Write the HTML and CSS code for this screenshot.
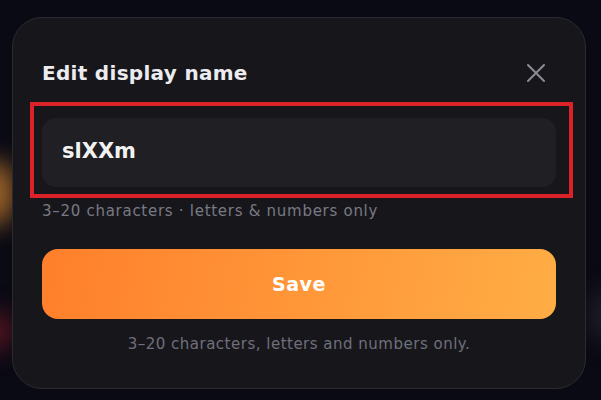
FILE: index.html
```html
<!DOCTYPE html>
<html lang="en">
<head>
    <meta charset="UTF-8">
    <meta name="viewport" content="width=device-width, initial-scale=1.0">
    <title>Edit display name</title>
    <link rel="stylesheet" href="styles.css">
</head>
<body>
    <div class="glow glow-orange"></div>
    <div class="glow glow-red"></div>
    <div class="glow glow-grey"></div>

    <div class="modal">
        <div class="modal-head">
            <h2>Edit display name</h2>
            <button class="close" aria-label="Close">
                <svg width="20" height="20" viewBox="0 0 20 20">
                    <path d="M2 2 L18 18 M18 2 L2 18" stroke="#8b8b96" stroke-width="2" stroke-linecap="round"/>
                </svg>
            </button>
        </div>
        <div class="field">
            <input class="name-input" type="text" value="slXXm">
            <div class="mark"></div>
        </div>
        <p class="hint">3–20 characters · letters &amp; numbers only</p>
        <button class="save">Save</button>
        <p class="note">3–20 characters, letters and numbers only.</p>
    </div>
</body>
</html>
```

FILE: styles.css
```css
html, body {
    height: 100%;
}
body {
    margin: 0;
    background: #0a0a14;
    font-family: "DejaVu Sans", sans-serif;
    overflow: hidden;
    position: relative;
}
/* blurred page colours peeking out behind the dialog */
.glow {
    position: absolute;
    border-radius: 50%;
    filter: blur(12px);
}
.glow-orange {
    left: -28px;
    top: 160px;
    width: 44px;
    height: 66px;
    background: #9a6228;
}
.glow-red {
    left: -26px;
    top: 312px;
    width: 40px;
    height: 38px;
    background: #5a1420;
}
.glow-grey {
    right: -20px;
    top: 290px;
    width: 30px;
    height: 50px;
    background: #22222e;
}
.modal {
    position: relative;
    margin: 17px 0 0 12px;
    width: 514px;
    padding: 30px 29px 35px;
    background: #17171b;
    border: 1px solid #2a2a30;
    border-radius: 30px;
}
.modal-head {
    display: flex;
    justify-content: space-between;
    align-items: center;
    height: 50px;
}
.modal-head h2 {
    margin: 0;
    font-size: 20px;
    letter-spacing: 0.3px;
    font-weight: 700;
    color: #ececf0;
}
.close {
    background: none;
    border: 0;
    padding: 0;
    margin-right: 10px;
    width: 20px;
    height: 20px;
}
.field {
    position: relative;
    margin-top: 20px;
}
.name-input {
    display: block;
    box-sizing: border-box;
    width: 100%;
    height: 69px;
    padding: 0 20px 4px;
    background: #1f1f24;
    border: 0;
    border-radius: 14px;
    color: #f2f2f2;
    font-family: inherit;
    font-size: 21px;
    font-weight: 700;
    outline: none;
}
.mark {
    position: absolute;
    top: -16px;
    left: -12px;
    right: -17px;
    bottom: -11px;
    border: 4px solid #dc2229;
}
.hint {
    margin: 15px 0 0;
    font-size: 15px;
    line-height: 18px;
    letter-spacing: 0.72px;
    color: #797984;
}
.save {
    display: block;
    width: 100%;
    height: 70px;
    margin-top: 29px;
    border: 0;
    border-radius: 16px;
    background: linear-gradient(100deg, #ff7f2b, #ffad45);
    color: #fff;
    font-family: inherit;
    font-size: 19px;
    letter-spacing: 0.5px;
    font-weight: 700;
}
.note {
    margin: 16px 0 0;
    text-align: center;
    font-size: 15px;
    line-height: 18px;
    letter-spacing: 0.5px;
    color: #6f6f7b;
}
```
